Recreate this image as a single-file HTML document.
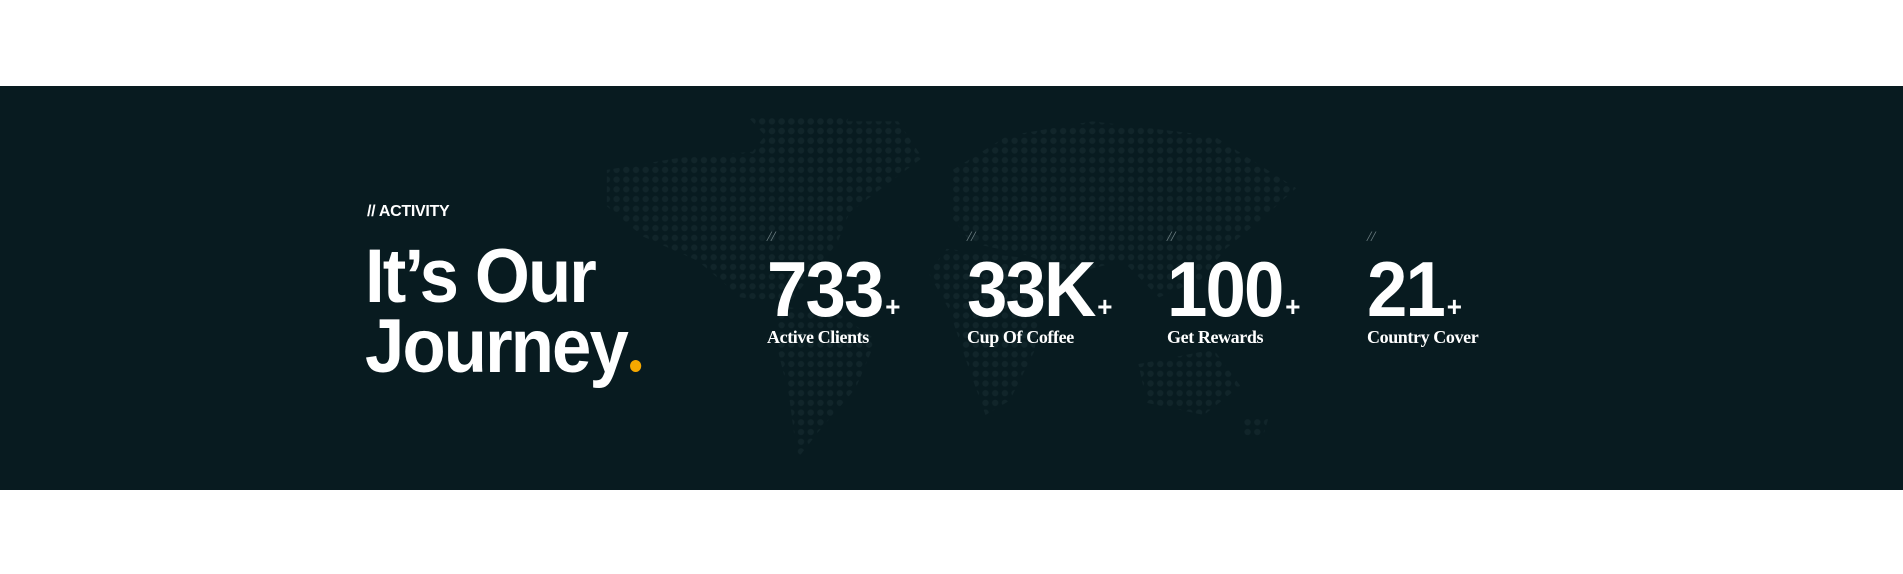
<!DOCTYPE html>
<html><head><meta charset="utf-8"><style>
*{margin:0;padding:0;box-sizing:border-box}
html,body{width:1903px;height:574px;background:#fff;overflow:hidden;font-family:"Liberation Sans",sans-serif}
.band{position:absolute;left:0;top:86px;width:1903px;height:404px;background:#081b20}
svg.map{position:absolute;left:0;top:0}
.t{position:absolute;color:#fff;white-space:nowrap}
.act{left:367px;top:203px;font-size:16px;font-weight:bold;letter-spacing:-0.3px}
.h{left:365px;top:242px;font-size:76px;font-weight:bold;line-height:70px;letter-spacing:-2px;transform:scaleX(.93);transform-origin:left}
.h .dot{display:inline-block;width:12px;height:12px;border-radius:50%;background:#f5a800;margin-left:3px}
.sl{font-family:"Liberation Serif",serif;font-style:italic;font-size:15px;color:#6f8084;top:229px}
.n{font-size:78px;font-weight:bold;top:249px;letter-spacing:-2px;line-height:80px;transform:scaleX(.93);transform-origin:left}
.n small{font-size:28px;letter-spacing:0;margin-left:3px}
.lb{font-family:"Liberation Serif",serif;font-weight:bold;font-size:18px;top:327px;letter-spacing:-0.4px}
</style></head><body>
<div class="band"></div>
<svg class="map" width="1903" height="574" viewBox="0 0 1568 473">
<defs>
<pattern id="p" x="0" y="0" width="8" height="8" patternUnits="userSpaceOnUse"><circle cx="4" cy="4" r="2.6" fill="#11252a"/></pattern>
</defs>
<g fill="url(#p)">
<polygon points="500,140 560,130 620,125 640,100 740,100 760,130 720,160 700,175 690,200 670,225 650,250 610,245 575,215 530,195 500,170"/>
<polygon points="615,95 700,95 690,120 640,122"/>
<polygon points="640,252 690,258 722,280 705,320 675,355 657,378 650,325 640,285"/>
<polygon points="785,140 830,112 900,100 1000,112 1068,155 1040,180 1010,205 990,230 955,245 925,215 885,225 845,210 800,200 785,180"/>
<polygon points="780,205 840,212 862,240 852,290 832,330 812,342 797,300 782,255 765,225"/>
<polygon points="938,300 1000,288 1022,318 992,342 945,332"/>
<polygon points="1025,345 1045,345 1040,362 1025,358"/>
</g>
</svg>
<div class="t act">// ACTIVITY</div>
<div class="t h">It’s Our<br>Journey<span class="dot"></span></div>

<div class="t sl" style="left:767px">//</div>
<div class="t n" style="left:767px">733<small>+</small></div>
<div class="t lb" style="left:767px">Active Clients</div>

<div class="t sl" style="left:967px">//</div>
<div class="t n" style="left:967px">33K<small>+</small></div>
<div class="t lb" style="left:967px">Cup Of Coffee</div>

<div class="t sl" style="left:1167px">//</div>
<div class="t n" style="left:1167px">100<small>+</small></div>
<div class="t lb" style="left:1167px">Get Rewards</div>

<div class="t sl" style="left:1367px">//</div>
<div class="t n" style="left:1367px">21<small>+</small></div>
<div class="t lb" style="left:1367px">Country Cover</div>
</body></html>
